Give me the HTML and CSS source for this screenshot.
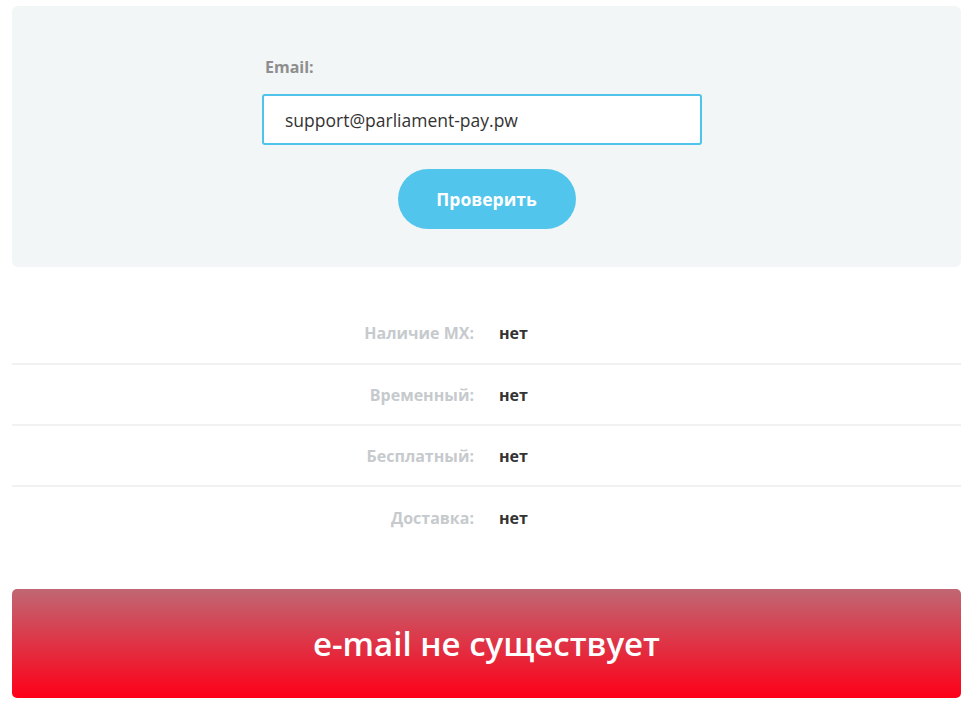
FILE: index.html
```html
<!DOCTYPE html>
<html lang="ru">
  <head>
    <meta charset="utf-8">
    <title>Проверка e-mail</title>
    <link rel="stylesheet" href="styles.css">
  </head>
  <body>
    <div id="wrapper">

      <form class="check-box">
        <div class="field">
          <label class="field-label" for="email">Email:</label>
          <input id="email" class="field-input" value="support@parliament-pay.pw">
        </div>
        <button class="bCheck" type="button">Проверить</button>
      </form>

      <div id="results">
        <div class="row"><span class="key">Наличие MX:</span><span class="val">нет</span></div>
        <div class="row"><span class="key">Временный:</span><span class="val">нет</span></div>
        <div class="row"><span class="key">Бесплатный:</span><span class="val">нет</span></div>
        <div class="row"><span class="key">Доставка:</span><span class="val">нет</span></div>
      </div>

      <div class="verdict">e-mail не существует</div>

    </div>
  </body>
</html>
```

FILE: styles.css
```css
body         {  margin: 6px 13px 0 12px;  background: #fff;  font-family: "Open Sans", "DejaVu Sans", sans-serif;  }
.check-box   {  background: #f3f6f7;  border-radius: 6px;  height: 261px;  box-sizing: border-box;  padding-top: 51px;  display: flex;  flex-direction: column;  }
.field       {  width: 440px;  margin-left: 250px;  display: flex;  flex-direction: column;  }
.field-label {  font-size: 16px;  font-weight: 700;  color: #8e8e8e;  padding-left: 3px;  line-height: 20px;  margin-bottom: 17px;  }
.field-input {  height: 51px;  box-sizing: border-box;  border: 2px solid #4fc3ea;  border-radius: 3px;  padding: 0 21px;  font-family: inherit;  font-size: 17.5px;  color: #333;  background: #fff;  outline: none;  }
.bCheck      {  align-self: center;  margin-top: 24px;  width: 178px;  height: 60px;  border: 0;  border-radius: 30px;  background: #52c5ec;  color: #fff;  font-family: inherit;  font-size: 17.5px;  font-weight: 700;  }
#results     {  margin-top: 36px;  }
.row         {  display: grid;  grid-template-columns: 1fr 1fr;  column-gap: 25px;  height: 61px;  align-items: center;  border-bottom: 2px solid #f1f1f1;  box-sizing: border-box;  font-size: 16px;  font-weight: 700;  }
.row:first-child {  height: 62px;  }
.row:last-child {  border-bottom: 0;  }
.key         {  text-align: right;  color: #c6cacd;  }
.val         {  color: #333;  }
.verdict     {  margin-top: 41px;  height: 109px;  border-radius: 5px;  background: linear-gradient(#c06773, #fe0018);  color: #fff;  font-size: 33px;  font-weight: 600;  display: flex;  align-items: center;  justify-content: center;  }
```
